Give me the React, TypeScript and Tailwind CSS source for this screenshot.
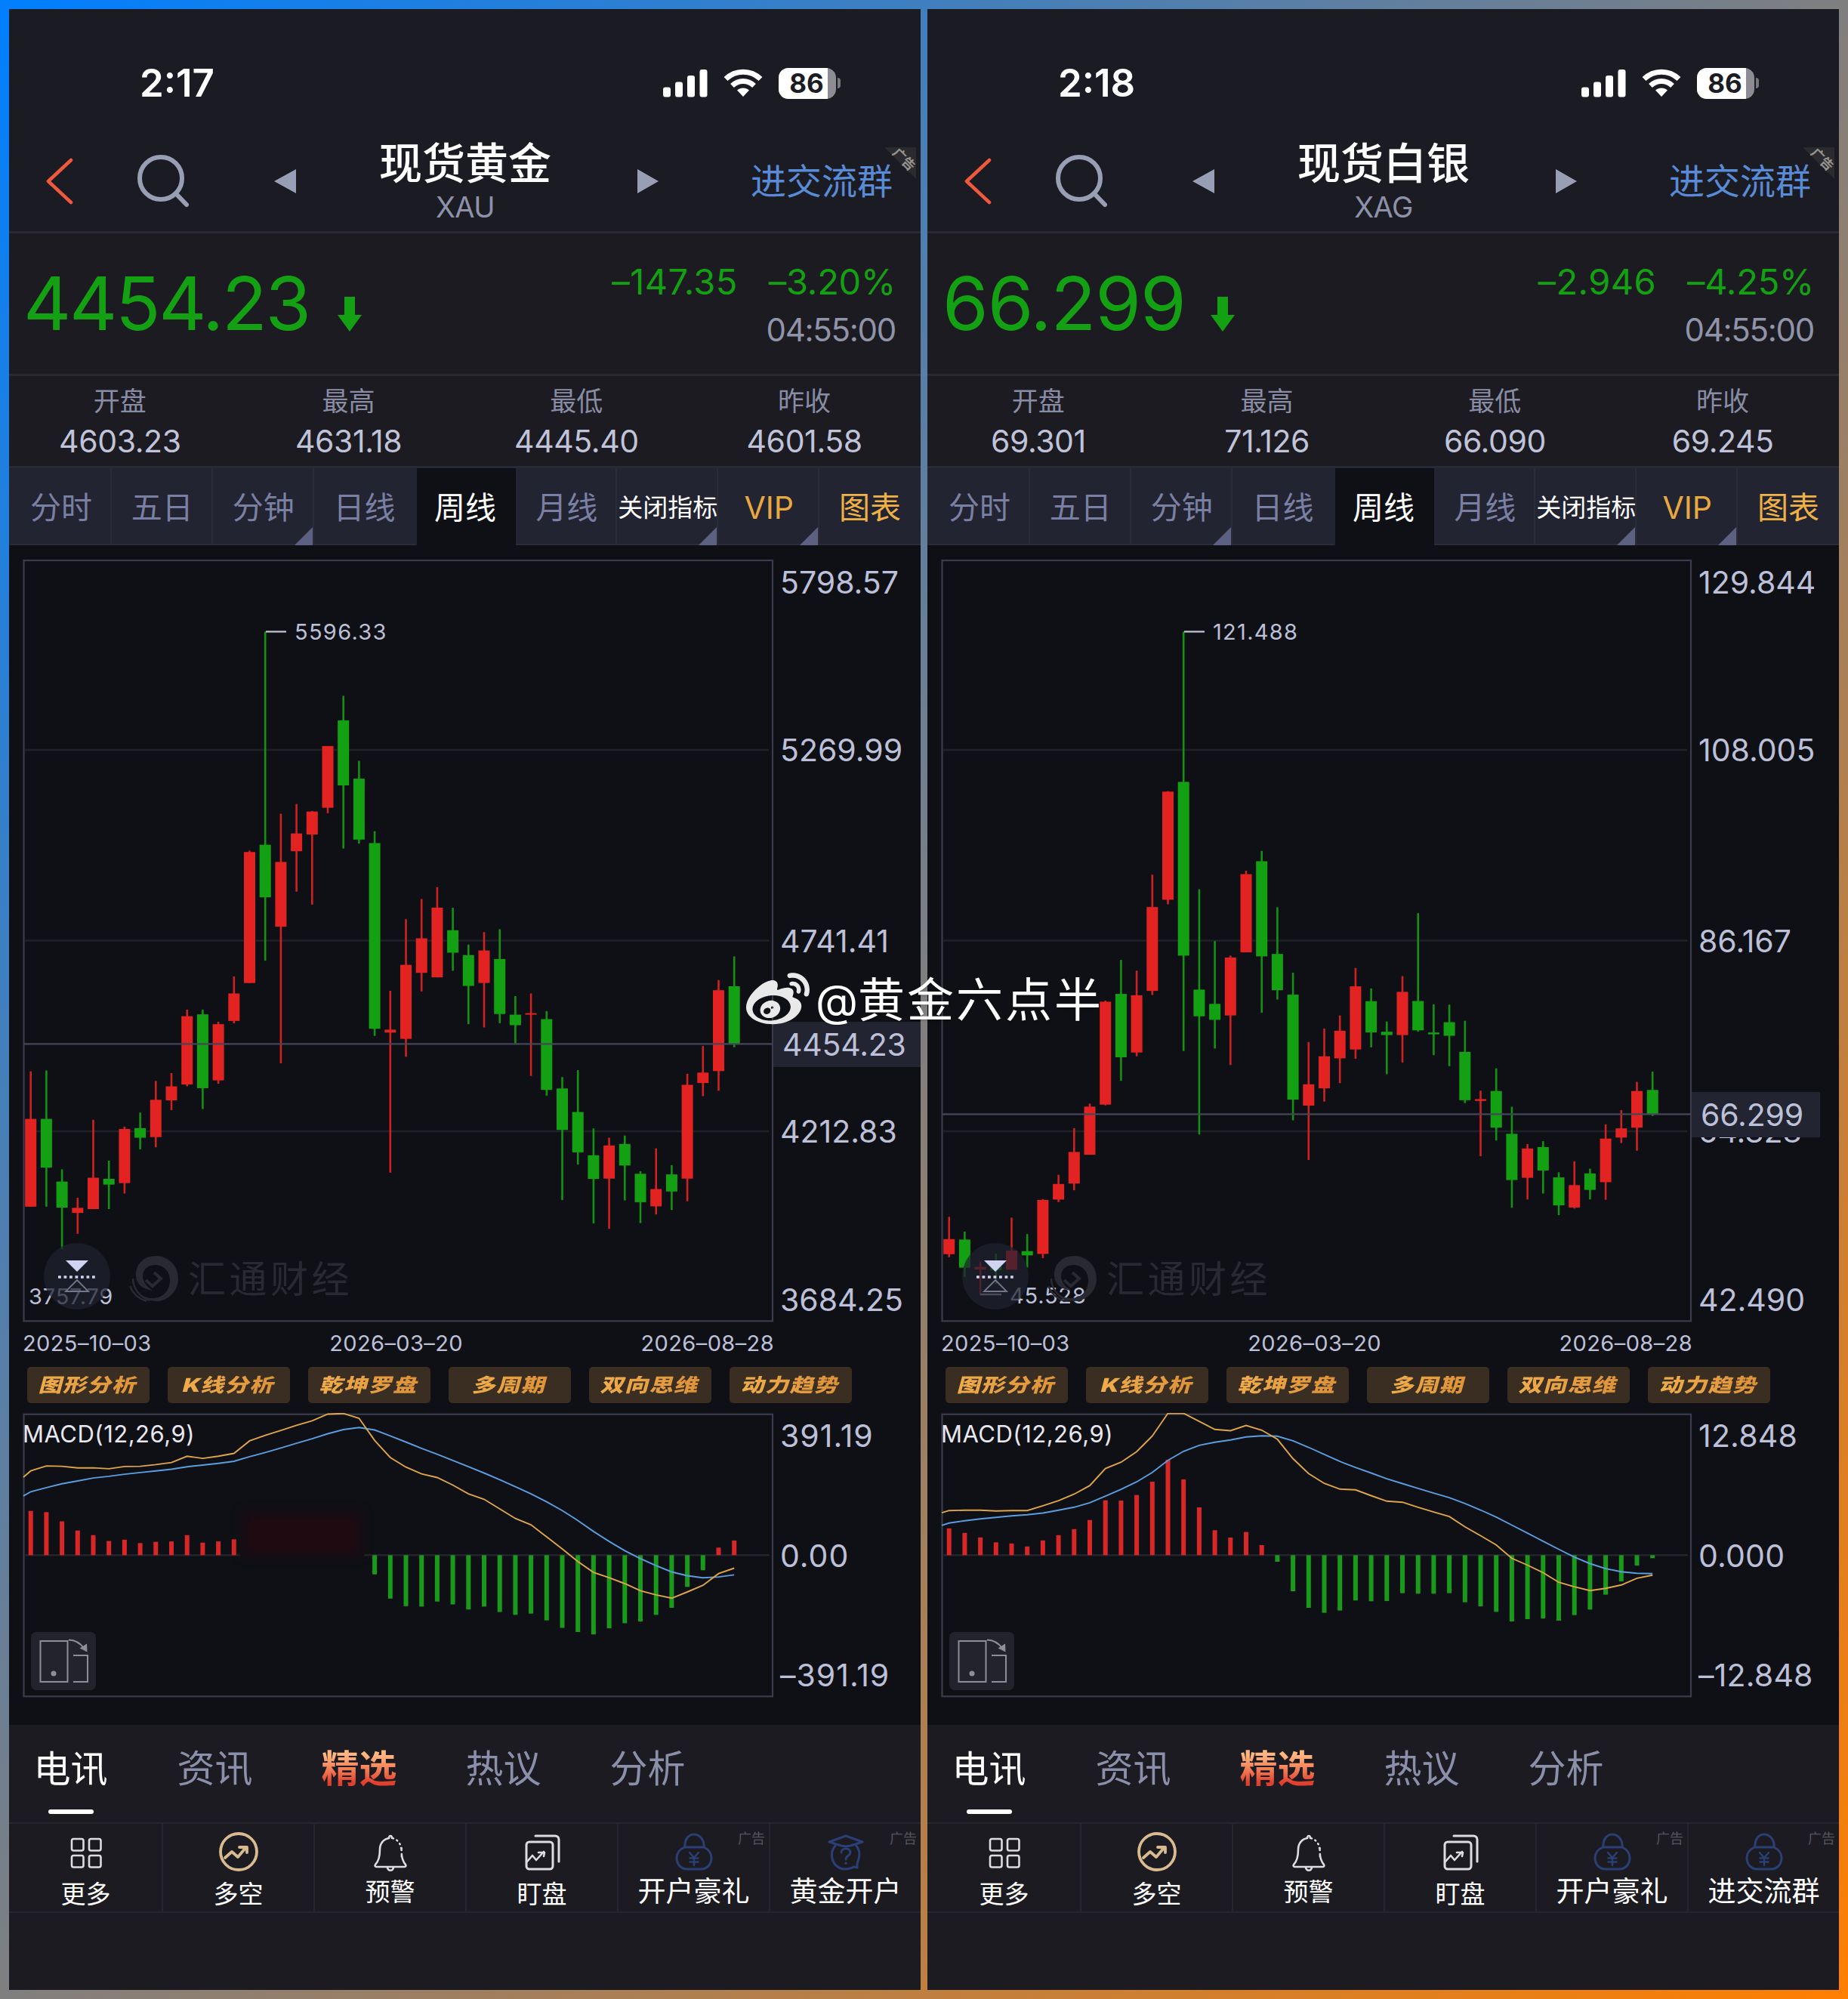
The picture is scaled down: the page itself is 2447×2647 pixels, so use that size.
import { FaWeibo } from "react-icons/fa";

type Candle = [dir: "r" | "g", high: number, top: number, bottom: number, low: number];

interface Macd {
  unit: number;
  top: number;
  bars: number[];
  fast: number[];
  slow: number[];
}

interface Instrument {
  clock: string;
  name: string;
  code: string;
  price: string;
  priceClass: string;
  change: string;
  percent: string;
  stats: [string, string][];
  ticks: string[];
  peak: string;
  bottom: string;
  bottomIndented: boolean;
  tagClass: string;
  candles: Candle[];
  priceY: number;
  macdTicks: string[];
  macdTickClass: string;
  macd: Macd;
  lastAction: "cap" | "bag";
  lastLabel: string;
}

const UP = "#e32322";
const DOWN = "#14a013";
const STEP = 20.7;
const FIRST_X = 40.7;

const gold: Instrument = {
  clock: "2:17",
  name: "现货黄金",
  code: "XAU",
  price: "4454.23",
  priceClass: "tracking-[-2.3px] -ml-px mr-[37px]",
  change: "–147.35",
  percent: "–3.20%",
  stats: [["开盘", "4603.23"], ["最高", "4631.18"], ["最低", "4445.40"], ["昨收", "4601.58"]],
  ticks: ["5798.57", "5269.99", "4741.41", "4212.83", "3684.25"],
  peak: "5596.33",
  bottom: "3757.79",
  bottomIndented: false,
  tagClass: "top-[612px] w-[195px]",
  priceY: 1382.3,
  candles: [
    ["r", 1418.7, 1481.6, 1597.8, 1597.8], ["g", 1417.5, 1481.6, 1546, 1597.8], ["g", 1548.4, 1564.6, 1599, 1654],
    ["r", 1586, 1599.4, 1606.1, 1633.8], ["r", 1482.8, 1559.5, 1601, 1601], ["g", 1537, 1561, 1568.6, 1601],
    ["r", 1491.9, 1495, 1566.6, 1580.4], ["g", 1473.3, 1493.8, 1506.5, 1521.9], ["r", 1431.4, 1456.3, 1505.7, 1519.2],
    ["r", 1421, 1438.5, 1457, 1470], ["r", 1336.9, 1345.6, 1436, 1438.5], ["g", 1336.9, 1343.2, 1440.9, 1468.5],
    ["r", 1353, 1356.2, 1430.6, 1435], ["r", 1293, 1315.5, 1351.9, 1355], ["r", 1126.4, 1128.2, 1301.7, 1301.7],
    ["g", 836.4, 1118.6, 1188.2, 1272.1], ["r", 1077.5, 1141.4, 1227.1, 1408], ["r", 1064.6, 1103.6, 1127.1, 1180.7],
    ["r", 1073.9, 1074.6, 1105, 1197.9], ["r", 987.9, 987.9, 1069.6, 1076.8], ["g", 921.4, 953.9, 1040, 1123.6],
    ["g", 1007.5, 1031.1, 1111.8, 1117.1], ["g", 1100.7, 1116.4, 1362.2, 1371.7], ["r", 1312, 1363.4, 1367.3, 1552.8],
    ["r", 1217.1, 1277.6, 1375.6, 1399.3], ["r", 1190.4, 1242.5, 1288.2, 1312.8], ["r", 1174.6, 1201.8, 1294.2, 1294.2],
    ["g", 1202.1, 1231.8, 1261.5, 1285.5], ["g", 1250.8, 1264.7, 1305.5, 1356.2], ["r", 1234.3, 1258.6, 1301.6, 1360.5],
    ["g", 1230.4, 1269.9, 1342.7, 1354.9], ["g", 1318.9, 1343.6, 1357.5, 1381.8], ["r", 1315.5, 1341.6, 1343.4, 1424.7],
    ["g", 1338.9, 1349.5, 1443.2, 1450.8], ["g", 1426.2, 1441.3, 1496.2, 1589.1], ["g", 1417.1, 1472.5, 1525.9, 1542.1],
    ["g", 1494.2, 1529.8, 1561.1, 1620], ["r", 1506.5, 1516.8, 1560.7, 1627.1], ["g", 1503.7, 1514.8, 1543.3, 1589.5],
    ["g", 1550.8, 1554.3, 1591.9, 1619.6], ["r", 1520.7, 1574.5, 1597.4, 1608.1], ["g", 1542.9, 1555.1, 1577.7, 1602.2],
    ["r", 1421.9, 1436.5, 1560.7, 1590.7], ["r", 1385.1, 1420.3, 1434.1, 1451.5], ["r", 1297.7, 1311.2, 1418.3, 1444.4],
    ["g", 1266.5, 1306, 1382, 1386.7],
  ],
  macdTicks: ["391.19", "0.00", "–391.19"],
  macdTickClass: "tracking-[1px]",
  macd: {
    unit: 0.55293,
    top: 167,
    bars: [
      58.6, 57, 44.8, 32.6, 26.5, 18.8, 20.5, 16, 17.7, 18.2, 26.5, 16.6, 18.2, 21, 0, 0, 0, 0, 0, 0, 0, 0,
      -25.4, -57.5, -67.5, -68, -61.4, -65.2, -71.9, -68, -75.2, -79, -77.4, -86.3, -96.2, -101.7, -105, -96.8,
      -90.1, -87.9, -79, -69.7, -42, -19.9, 10, 19.4,
    ],
    fast: [
      318, 303, 291, 292, 296, 295.5, 298, 292.5, 292, 288, 283, 268, 273, 268, 261, 231, 218, 206, 194, 183, 167,
      165.5, 177, 230, 271, 294, 310, 319, 337, 358, 371, 394, 417, 432, 461, 490, 520, 546, 559, 573, 590, 600,
      608, 593, 577, 549, 536,
    ],
    slow: [
      363, 353, 343, 334, 327, 320, 316, 311, 307, 303, 299, 293, 289, 285, 280, 269, 259, 248, 237, 226, 214, 204,
      199, 205, 219, 234, 249, 263, 278, 293, 308, 324, 341, 358, 377, 398, 422, 448, 472, 494, 513, 530, 545, 554,
      559, 557, 552,
    ],
  },
  lastAction: "cap",
  lastLabel: "黄金开户",
};

const silver: Instrument = {
  clock: "2:18",
  name: "现货白银",
  code: "XAG",
  price: "66.299",
  priceClass: "tracking-[-1px] mr-[33px]",
  change: "–2.946",
  percent: "–4.25%",
  stats: [["开盘", "69.301"], ["最高", "71.126"], ["最低", "66.090"], ["昨收", "69.245"]],
  ticks: ["129.844", "108.005", "86.167", "64.328", "42.490"],
  peak: "121.488",
  bottom: "45.528",
  bottomIndented: true,
  tagClass: "top-[705px] w-[170px]",
  priceY: 1475.3,
  candles: [
    ["r", 1611.3, 1640.8, 1660.7, 1664.7], ["g", 1630.8, 1641.4, 1678.6, 1690.9], ["r", 1670.6, 1677.6, 1681, 1714],
    ["g", 1660, 1676, 1682, 1700], ["r", 1612.3, 1656, 1681.2, 1681.2], ["g", 1634.2, 1656.7, 1662.3, 1678.3],
    ["r", 1587.7, 1589, 1660.4, 1666], ["r", 1555.6, 1567.8, 1588.4, 1591.7], ["r", 1493.9, 1525.4, 1567.2, 1576.1],
    ["r", 1461.4, 1465.4, 1529, 1529], ["r", 1325, 1326.4, 1462.7, 1463.7], ["g", 1271.1, 1316.1, 1400, 1431.2],
    ["r", 1285.4, 1317.9, 1393.7, 1398.7], ["r", 1158.2, 1201.1, 1312.1, 1317.5], ["r", 1047.5, 1048.2, 1191.4, 1197.5],
    ["g", 836.4, 1035.4, 1265.4, 1391.7], ["g", 1177.5, 1310.4, 1345.7, 1502.2], ["g", 1246.1, 1329.3, 1350.4, 1388.4],
    ["r", 1265.4, 1267.9, 1344.6, 1410.3], ["r", 1152.9, 1157.5, 1261.1, 1261.1], ["g", 1126.8, 1140.4, 1266.4, 1341.1],
    ["g", 1201.4, 1263.2, 1311.1, 1323.6], ["g", 1287.9, 1317.1, 1456.1, 1483.6], ["r", 1379.8, 1435.8, 1464, 1536],
    ["r", 1361.9, 1398.7, 1441.1, 1458.7], ["r", 1344.6, 1364.9, 1401.4, 1434.2], ["r", 1281.8, 1306.1, 1389.7, 1402],
    ["g", 1308.9, 1325.7, 1367.1, 1386.8], ["g", 1352.6, 1366.2, 1370.6, 1422.4], ["r", 1292.5, 1313.4, 1370.6, 1406.9],
    ["g", 1209.2, 1325.5, 1364.3, 1366.2], ["g", 1329.9, 1367.2, 1369.6, 1397.2], ["g", 1330.3, 1353.6, 1371.5, 1411.8],
    ["g", 1351.7, 1392.9, 1456.8, 1460.7], ["r", 1444.2, 1455.4, 1457.8, 1531], ["g", 1414.7, 1444.7, 1493.2, 1510.2],
    ["g", 1465.6, 1501.4, 1562.5, 1599.3], ["r", 1515, 1520.8, 1559.6, 1588.2], ["g", 1511.1, 1518.9, 1549.9, 1580.4],
    ["g", 1552.3, 1559.1, 1596, 1609], ["r", 1537.8, 1569.3, 1598.9, 1600.3], ["g", 1547.5, 1553.8, 1575.6, 1588.2],
    ["r", 1488.8, 1507.7, 1565.4, 1588.7], ["r", 1469.9, 1494.2, 1506.3, 1513.6], ["r", 1432.6, 1444.7, 1493.2, 1523.7],
    ["g", 1419, 1443.3, 1475.3, 1477.7],
  ],
  macdTicks: ["12.848", "0.000", "–12.848"],
  macdTickClass: "tracking-[0.2px]",
  macd: {
    unit: 1 / 3,
    top: 68,
    bars: [
      35.5, 29.5, 23.5, 17, 15.5, 11.5, 19.5, 26.5, 34.5, 46.5, 72.7, 72.3, 79.7, 97.3, 126.3, 100.3, 63.3, 33,
      23.3, 30.7, 13.3, -8.7, -47.7, -69.7, -76.3, -73.3, -60, -61, -60.7, -50.3, -51, -51, -50.3, -62.3, -67.7,
      -75, -87.7, -84.7, -83.7, -86.7, -79.3, -72, -52.3, -34.7, -13.7, -4,
    ],
    fast: [
      460, 451, 450, 450, 453, 451, 451, 432, 412, 386, 352, 284, 259, 217, 155, 65, 65, 97, 129, 134, 113, 132,
      168, 245, 304, 343, 366, 369, 392, 414, 418, 438, 457, 475, 516, 551, 588, 641, 668, 698, 736, 754, 769,
      760, 747, 720, 708,
    ],
    slow: [
      510, 501, 492, 484, 478, 472, 468, 461, 450, 438, 420, 394, 367, 337, 300, 252, 216, 192, 180, 171, 159,
      154, 156, 174, 200, 228, 256, 280, 302, 325, 344, 363, 382, 400, 423, 449, 477, 509, 541, 573, 605, 636,
      662, 682, 694, 700, 702,
    ],
  },
  lastAction: "bag",
  lastLabel: "进交流群",
};

function StatusBar({ clock }: { clock: string }) {
  return (
    <div className="flex h-[140px] items-center pt-[56px] pl-[173px]">
      <span className="text-[51px] leading-[60px] font-semibold text-white">{clock}</span>
      <div className="mr-[106px] ml-auto flex items-center">
        <svg className="h-[38px] w-[60px]" viewBox="0 0 60 38" fill="#fff">
          <rect x="0" y="24.5" width="10" height="13" rx="3" />
          <rect x="16" y="17.5" width="10" height="20" rx="3" />
          <rect x="32" y="9" width="10" height="28.5" rx="3" />
          <rect x="48.5" y="1" width="10" height="36.5" rx="3" />
        </svg>
        <svg className="ml-[20px] h-[38px] w-[52px]" viewBox="0 0 52 38" fill="none" stroke="#fff" strokeWidth="7">
          <path d="M3 13.5C16 1 36 1 49 13.5" />
          <path d="M11.5 22.5c8.500-8 20.500-8 29 0" />
          <path d="M26 37l-8-8.500c4.500-4 11.500-4 16 0z" fill="#fff" stroke="none" />
        </svg>
        <div className="relative ml-[21px] flex h-[41px] w-[76px] items-center justify-center overflow-hidden rounded-[13px] bg-[#8c8c92]">
          <div className="absolute inset-y-0 left-0 w-[65px] bg-white" />
          <span className="relative pr-[2px] text-[35px] leading-[41px] font-bold text-[#1c1c24]">86</span>
        </div>
        <div className="ml-[2px] h-[14px] w-[4px] rounded-r-full bg-[#77777d]" />
      </div>
    </div>
  );
}

function TitleBar({ item }: { item: Instrument }) {
  return (
    <div className="relative flex h-[157px] items-center border-b-[3px] border-[#292a35] pt-[22px] pl-[48px]">
      <svg className="h-[64px] w-[38px]" viewBox="0 0 38 64" fill="none" stroke="#f2593c" strokeWidth="4.500" strokeLinecap="round" strokeLinejoin="round">
        <path d="M34 4L4 32l30 28" />
      </svg>
      <svg className="ml-[83px] h-[70px] w-[70px]" viewBox="0 0 70 70" fill="none" stroke="#989eb4" strokeWidth="6">
        <circle cx="32" cy="31" r="28" />
        <path d="M51.500 51l14.500 15" strokeLinecap="round" />
      </svg>
      <svg className="ml-[112px] h-[32px] w-[29px]" viewBox="0 0 29 32" fill="#989eb4">
        <path d="M0 16L29 0v32z" />
      </svg>
      <div className="ml-[110px] flex w-[228px] flex-col items-center whitespace-nowrap">
        <span className="pt-px text-[57px] leading-[66px] font-medium text-white">{item.name}</span>
        <span className="text-[38px] leading-[48px] font-normal tracking-[-0.5px] text-[#8d92a9]">{item.code}</span>
      </div>
      <svg className="ml-[114px] h-[32px] w-[28px]" viewBox="0 0 28 32" fill="#989eb4">
        <path d="M28 16L0 0v32z" />
      </svg>
      <span className="mr-[37px] ml-auto text-[47px] leading-[60px] text-[#5a8bd6]">进交流群</span>
      <div className="absolute top-[43px] right-[6px] h-[42px] w-[42px]">
        <svg className="absolute inset-0 h-full w-full" viewBox="0 0 42 42" fill="#2a2a2f">
          <path d="M0 0h42v42z" />
        </svg>
        <span className="absolute top-[7px] left-[9px] rotate-45 text-[17px] leading-[18px] font-bold whitespace-nowrap text-[#96948f]">广告</span>
      </div>
    </div>
  );
}

function Quote({ item }: { item: Instrument }) {
  return (
    <div className="flex h-[189px] items-center border-b-[3px] border-[#292930] pl-[20px] text-[#14a013]">
      <span className={"text-[98px] leading-[110px] font-normal " + item.priceClass}>{item.price}</span>
      <svg className="mt-[27px] h-[46px] w-[32px]" viewBox="0 0 32 46" fill="#14a013">
        <path d="M9 0h14v24h9L16 46 0 24h9z" />
      </svg>
      <div className="mt-[6px] mr-[33px] ml-auto flex flex-col items-end">
        <div className="flex gap-[41px] text-[47px] leading-[64px] font-normal">
          <span className="tracking-[0.4px]">{item.change}</span>
          <span className="tracking-[-0.2px]">{item.percent}</span>
        </div>
        <span className="text-[42px] leading-[64px] font-normal tracking-[-1.300px] text-[#9094a9]">04:55:00</span>
      </div>
    </div>
  );
}

function Stats({ stats }: { stats: [string, string][] }) {
  return (
    <div className="grid h-[119px] grid-cols-4 pt-[7px] text-center">
      {stats.map(([label, value], i) => (
        <div key={label} className={i === 0 ? "flex flex-col pr-[8px]" : "flex flex-col pr-[6px]"}>
          <span className="text-[35px] leading-[53px] font-normal text-[#888da5]">{label}</span>
          <span className="text-[41px] leading-[53px] font-normal tracking-[-0.4px] text-[#c0c4da]">{value}</span>
        </div>
      ))}
    </div>
  );
}

const periods = [
  { label: "分时", cls: "text-[41px] text-[#7a80a4]", menu: false },
  { label: "五日", cls: "text-[41px] text-[#7a80a4]", menu: false },
  { label: "分钟", cls: "text-[41px] text-[#7a80a4]", menu: true },
  { label: "日线", cls: "text-[41px] text-[#7a80a4]", menu: false },
  { label: "周线", cls: "text-[41px] text-white", menu: false },
  { label: "月线", cls: "text-[41px] text-[#7a80a4]", menu: false },
  { label: "关闭指标", cls: "text-[33px] text-white", menu: true },
  { label: "VIP", cls: "text-[41px] text-[#e9a940]", menu: true },
  { label: "图表", cls: "text-[41px] text-[#efb046]", menu: false },
];

function PeriodTabs() {
  return (
    <div className="grid h-[105px] grid-cols-9 border-t-[3px] border-[#282a38] bg-[#222431] pl-[2px]">
      {periods.map((p, i) => (
        <div
          key={p.label}
          className={
            i === 4
              ? "relative ml-[2px] flex items-center justify-center bg-[#0f1015] pt-[2px] pr-[3px]"
              : i === 3 || i === 8
                ? "relative flex items-center justify-center border-b-2 border-[#2a2c39] pt-[4px]"
                : "relative flex items-center justify-center border-r-2 border-b-2 border-[#2a2c39] pt-[4px] pl-[2px]"
          }
        >
          <span className={"-mx-2 leading-[60px] whitespace-nowrap " + p.cls}>{p.label}</span>
          {p.menu && (
            <svg className="absolute right-0 -bottom-[2px] h-[24px] w-[24px]" viewBox="0 0 24 24" fill="#5c6182">
              <path d="M24 0v24H0z" />
            </svg>
          )}
        </div>
      ))}
    </div>
  );
}

function CandleChart({ item }: { item: Instrument }) {
  return (
    <svg className="h-[1010px] w-[995px] shrink-0" viewBox="30 741 995 1010">
      <g stroke="#202128" strokeWidth="2.500">
        <path d="M33 993H1018M33 1245.500H1018M33 1498H1018" />
      </g>
      <rect x="31.500" y="742" width="991.500" height="1007.300" fill="none" stroke="#3b3c4b" strokeWidth="2.200" />
      {item.candles.map(([dir, high, top, bottom, low], i) => {
        const x = FIRST_X + i * STEP;
        const fill = dir === "r" ? UP : DOWN;
        return (
          <g key={i} fill={fill}>
            <rect x={x - 1.3} y={high} width="2.600" height={Math.max(low - high, 1)} opacity="0.9" />
            <rect x={x - 7.5} y={top} width="15" height={Math.max(bottom - top, 2)} />
          </g>
        );
      })}
      <path d={`M32 ${item.priceY}H1023`} stroke="#45465a" strokeWidth="2.200" />
      <path d="M352 836.400h27" stroke="#b9bccf" strokeWidth="2.400" />
      {item.bottomIndented && <path d="M82 1714h28" stroke="#b9bccf" strokeWidth="2.400" />}
    </svg>
  );
}

function BrandMark() {
  return (
    <div className="absolute top-[918px] left-[141px] flex items-center text-[#292a31]">
      <svg className="h-[64px] w-[66px]" viewBox="0 0 66 64" fill="none" stroke="#292a31">
        <path d="M35 2c17 0 30 13 30 30S51 62 36 62c-10 0-18-4-23-10 6 4 12 6 18 6 14 0 23-10 23-24 0-11-8-20-19-20-10 0-17 6-17 15 0 8 6 14 13 19C18 46 10 40 9 29 8 14 19 2 35 2z" fill="#292a31" stroke="none" />
        <path d="M33 24l9 8-11 10-9-8" strokeWidth="4" />
        <path d="M5 32c0 12 8 24 22 29M1 42c4 10 12 17 22 20" strokeWidth="2.500" />
      </svg>
      <span className="ml-[12px] pt-[3px] text-[50px] leading-[64px] tracking-[4.500px] whitespace-nowrap">汇通财经</span>
    </div>
  );
}

function ZoomToggle() {
  return (
    <svg className="absolute top-[905px] left-[28px] h-[88px] w-[88px]" viewBox="0 0 88 88">
      <circle cx="44" cy="44" r="44" fill="#1f2130" fillOpacity="0.72" />
      <path d="M29 23h30L44 38z" fill="#d0d4f2" />
      <path d="M19 45h49" stroke="#d0d4f2" strokeWidth="3.500" strokeDasharray="3.800 3.700" />
      <path d="M44 49l15 15H29z" fill="none" stroke="#74778c" strokeWidth="1.800" />
    </svg>
  );
}

function MacdChart({ macd, smudge }: { macd: Macd; smudge: boolean }) {
  const zero = 2059.3 - 1871;
  const toPoints = (vals: number[]) =>
    vals
      .map((v, i) => {
        const x = i === 0 ? 1 : FIRST_X - 30 + (i - 1) * STEP;
        return `${x.toFixed(1)},${((v - macd.top) * macd.unit + 1.5).toFixed(1)}`;
      })
      .join(" ");
  return (
    <svg className="h-[377px] w-[995px] shrink-0" viewBox="0 0 995 377">
      <defs>
        <filter id="soft" filterUnits="userSpaceOnUse" x="240" y="80" width="260" height="160" colorInterpolationFilters="sRGB">
          <feGaussianBlur stdDeviation="6" />
        </filter>
      </defs>
      <path d={`M3 ${zero}H989`} stroke="#24252c" strokeWidth="2.500" />
      <rect x="1.500" y="1.700" width="991.500" height="373.600" fill="none" stroke="#3b3c4b" strokeWidth="2.200" />
      {macd.bars.map((h, i) =>
        h === 0 ? null : (
          <rect
            key={i}
            x={FIRST_X - 30 + i * STEP - 3}
            y={h > 0 ? zero - h : zero}
            width="6"
            height={Math.abs(h)}
            fill={h > 0 ? "#d92727" : "#1a9a1a"}
          />
        )
      )}
      {smudge && (
        <g>
          <path d={`M288 ${zero}H452`} stroke="#0f1015" strokeWidth="4" />
          <g filter="url(#soft)">
            <rect x="290" y="130" width="160" height="60" fill="#180c13" />
            <rect x="302" y="140" width="140" height="46" fill="#200a12" />
          </g>
        </g>
      )}
      <polyline points={toPoints(macd.slow)} fill="none" stroke="#5a9ee0" strokeWidth="1.900" />
      <polyline points={toPoints(macd.fast)} fill="none" stroke="#dfa548" strokeWidth="1.900" />
    </svg>
  );
}

function RotateButton() {
  return (
    <div className="absolute top-[290px] left-[11px] h-[77px] w-[86px] rounded-[7px] bg-[#22232c]">
      <svg className="h-full w-full" viewBox="0 0 86 77" fill="none" stroke="#8c8e99" strokeWidth="2">
        <rect x="12.500" y="12" width="36" height="54" />
        <circle cx="30" cy="55" r="3.500" fill="#8c8e99" stroke="none" />
        <path d="M56 31h19v35H56" />
        <path d="M50 10.500c10 0 16 5 21 12" />
        <path d="M64.500 21.500l10 5-.5-11z" fill="#8c8e99" stroke="none" />
      </svg>
    </div>
  );
}

const tools = ["图形分析", "K线分析", "乾坤罗盘", "多周期", "双向思维", "动力趋势"];
const tickGaps = ["", "mt-[162px]", "mt-[193px]", "mt-[192px]", "mt-[163px]"];

function Charts({ item }: { item: Instrument }) {
  return (
    <div className="flex h-[1562px] flex-col bg-[#0f1015] pt-[19px] pl-[18px] text-[#bcc0d8]">
      <div className="relative flex h-[1010px]">
        <CandleChart item={item} />
        <div className="ml-[8px] flex flex-col text-[41px] leading-[60px] font-normal">
          {item.ticks.map((t, i) => (
            <span key={t} className={tickGaps[i]}>{t}</span>
          ))}
        </div>
        <div className={"absolute left-[994px] flex h-[60px] items-center bg-[#222431] pl-[12px] " + item.tagClass}>
          <span className="text-[41px] leading-[60px] font-normal tracking-[-0.2px]">{item.price}</span>
        </div>
        <span className="absolute top-[80px] left-[360px] text-[29px] leading-[32px] font-normal tracking-[1.300px]">{item.peak}</span>
        <span
          className={
            item.bottomIndented
              ? "absolute top-[959px] left-[91px] text-[29px] leading-[32px] font-normal tracking-[0.8px]"
              : "absolute top-[960px] left-[8px] text-[29px] leading-[32px] font-normal tracking-[0.8px]"
          }
        >
          {item.bottom}
        </span>
        <BrandMark />
        <ZoomToggle />
      </div>
      <div className="flex h-[55px] w-[995px] items-center justify-between text-[29px] font-normal tracking-[0.4px]">
        <span>2025–10–03</span>
        <span>2026–03–20</span>
        <span>2026–08–28</span>
      </div>
      <div className="mt-[4px] ml-[6px] flex gap-[24.500px]">
        {tools.map((t) => (
          <div key={t} className="flex h-[48px] w-[161.500px] items-center justify-center rounded-[5px] bg-[#3a2e22] pl-[3px]">
            <span className="inline-block scale-x-[1.25] -skew-x-12 bg-linear-to-r from-[#f0ac4a] to-[#dd9238] bg-clip-text text-[25px] leading-[40px] font-black tracking-[1px] whitespace-nowrap text-transparent">
              {t}
            </span>
          </div>
        ))}
      </div>
      <div className="relative mt-[13px] flex">
        <MacdChart macd={item.macd} smudge={!item.bottomIndented} />
        <div className={"ml-[8px] flex flex-col justify-between text-[41px] leading-[60px] font-normal " + item.macdTickClass}>
          {item.macdTicks.map((t) => (
            <span key={t}>{t}</span>
          ))}
        </div>
        <span className="absolute top-[8px] left-0 text-[31px] leading-[40px] font-normal tracking-[0.5px] text-[#e8e8ee]">MACD(12,26,9)</span>
        <RotateButton />
      </div>
    </div>
  );
}

function NewsTabs() {
  return (
    <div className="flex h-[129px] pt-[24px] text-[50px] leading-[69px] text-[#8a8faa]">
      <div className="ml-[-14px] flex w-[191px] flex-col items-center text-[49px] text-white">
        电讯
        <div className="mt-[19px] h-[6px] w-[60px] rounded-full bg-white" />
      </div>
      <div className="w-[191px] text-center">资讯</div>
      <div className="w-[191px] text-center font-bold">
        <span className="bg-linear-to-b from-[#ffb680] from-20% to-[#e2402e] to-80% bg-clip-text text-transparent">精选</span>
      </div>
      <div className="w-[191px] text-center">热议</div>
      <div className="w-[191px] text-center">分析</div>
    </div>
  );
}

const stroke = { fill: "none", strokeLinecap: "round", strokeLinejoin: "round" } as const;

function GridIcon() {
  return (
    <svg className="h-[54px] w-[54px]" viewBox="0 0 54 54" {...stroke} stroke="#dcdce2" strokeWidth="2.600">
      <rect x="8" y="9" width="15.500" height="15.500" rx="2.500" />
      <rect x="31" y="9" width="15.500" height="15.500" rx="2.500" />
      <rect x="8" y="31" width="15.500" height="15.500" rx="2.500" />
      <rect x="31" y="31" width="15.500" height="15.500" rx="2.500" />
    </svg>
  );
}

function TrendIcon() {
  return (
    <svg className="h-[54px] w-[54px]" viewBox="0 0 54 54" {...stroke} stroke="#d9bb92" strokeWidth="3.800">
      <circle cx="27" cy="26" r="24" />
      <path d="M9 34l9-8 8 7 11-13" />
      <path d="M28 20h10v7" />
    </svg>
  );
}

function BellIcon() {
  return (
    <svg className="h-[54px] w-[54px]" viewBox="0 0 54 54" {...stroke} stroke="#dcdce2" strokeWidth="2.600">
      <path d="M25 8c-7 1-12 7-12 15 0 10-2 16-6 20-1 2 0 3 2 3h36c2 0 3-1 2-3-3-3-4-7-5-11" />
      <path d="M30 8c6 2 10 6 11 13" strokeDasharray="1 5" />
      <path d="M41.500 21l.5 11" strokeDasharray="3 5" />
      <path d="M25 8c0-4 4-4 4 0" />
      <path d="M23 47c1 5 7 5 8 0" />
    </svg>
  );
}

function WatchIcon() {
  return (
    <svg className="h-[54px] w-[54px]" viewBox="0 0 54 54" {...stroke} stroke="#dcdce2" strokeWidth="3">
      <rect x="6" y="13" width="35" height="36" rx="4" />
      <path d="M18 5h26c3 0 5 2 5 5v29" />
      <path d="M7 39l7-8 5 6 10-11M22 27h8l-1 5" strokeWidth="2.600" />
    </svg>
  );
}

function BagIcon() {
  return (
    <svg className="h-[54px] w-[54px]" viewBox="0 0 54 54" {...stroke} stroke="#2a3f75" strokeWidth="3">
      <path d="M15 20c-1-9 4-17 12-17s14 8 13 17" />
      <path d="M14 20h26c6 3 10 8 10 14 0 9-6 15-14 15H18C10 49 4 43 4 34c0-6 4-11 10-14z" />
      <path d="M21 27l6 7 6-7M27 34v10M21.500 34.500h11M21.500 39.500h11" strokeWidth="2.400" />
    </svg>
  );
}

function CapIcon() {
  return (
    <svg className="h-[54px] w-[54px]" viewBox="0 0 54 54" {...stroke} stroke="#2a3f75" strokeWidth="3">
      <path d="M5 13l22-8 22 8-11 3.500c-7 3-15 3-22 0z" />
      <path d="M13 18c-9 9-5 30 13 31 6 0 9-2 12-3l4 1v-4c0-3 1-4 2-7 2-8 0-15-4-19" />
      <path d="M21 27c0-7 12-7 12 0 0 4-6 4-6 9M27 41v.5" />
    </svg>
  );
}

function Toolbar({ item }: { item: Instrument }) {
  const actions = [
    { label: "更多", icon: <GridIcon />, cls: "mt-[3px] text-[33px]", ad: false },
    { label: "多空", icon: <TrendIcon />, cls: "mt-[3px] text-[33px]", ad: false },
    { label: "预警", icon: <BellIcon />, cls: "text-[33px]", ad: false },
    { label: "盯盘", icon: <WatchIcon />, cls: "mt-[3px] text-[33px]", ad: false },
    { label: "开户豪礼", icon: <BagIcon />, cls: "text-[37px]", ad: true },
    { label: item.lastLabel, icon: item.lastAction === "cap" ? <CapIcon /> : <BagIcon />, cls: "text-[37px]", ad: true },
  ];
  return (
    <div className="grid h-[120px] grid-cols-6 border-y-2 border-[#26262e] pl-px">
      {actions.map((a) => (
        <div key={a.label} className="relative flex flex-col items-center border-l-2 border-[#26262e] pt-[11px] first:border-l-0">
          {a.icon}
          <span className={"leading-[50px] whitespace-nowrap text-white " + a.cls}>{a.label}</span>
          {a.ad && <span className="absolute top-[9px] right-[5px] text-[18px] leading-[22px] text-[#55555d]">广告</span>}
        </div>
      ))}
    </div>
  );
}

function Phone({ item }: { item: Instrument }) {
  return (
    <div className="flex h-[2623px] w-[1207px] flex-col overflow-hidden bg-[#1c1b21]">
      <div className="bg-[#1b1b23]">
        <StatusBar clock={item.clock} />
        <TitleBar item={item} />
      </div>
      <Quote item={item} />
      <Stats stats={item.stats} />
      <PeriodTabs />
      <Charts item={item} />
      <NewsTabs />
      <Toolbar item={item} />
    </div>
  );
}

export default function App() {
  return (
    <div className="relative flex h-[2647px] w-[2447px] gap-[9px] bg-linear-to-br/srgb from-[#007fff] to-[#ff7f00] p-[12px] font-['Inter','Noto_Sans_CJK_SC',sans-serif]">
      <Phone item={gold} />
      <Phone item={silver} />
      <div className="absolute top-[1283px] left-[988px] flex items-center text-[62px] leading-[78px] whitespace-nowrap text-white text-shadow-sm">
        <FaWeibo className="h-[84px] w-[84px] text-[#e9e9e9]" />
        <span className="ml-[8px] w-[56px] text-[58px]">@</span>
        <span className="tracking-[3px]">黄金六点半</span>
      </div>
    </div>
  );
}
